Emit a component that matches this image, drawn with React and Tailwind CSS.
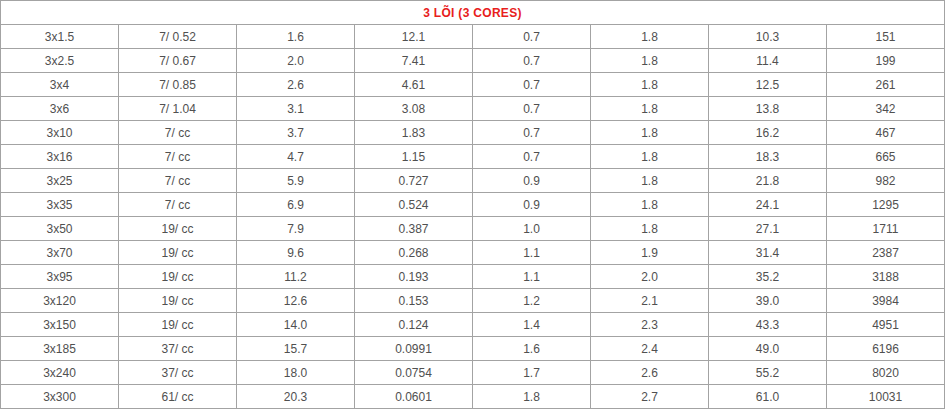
const rows = [
  ["3x1.5", "7/ 0.52", "1.6", "12.1", "0.7", "1.8", "10.3", "151"],
  ["3x2.5", "7/ 0.67", "2.0", "7.41", "0.7", "1.8", "11.4", "199"],
  ["3x4", "7/ 0.85", "2.6", "4.61", "0.7", "1.8", "12.5", "261"],
  ["3x6", "7/ 1.04", "3.1", "3.08", "0.7", "1.8", "13.8", "342"],
  ["3x10", "7/ cc", "3.7", "1.83", "0.7", "1.8", "16.2", "467"],
  ["3x16", "7/ cc", "4.7", "1.15", "0.7", "1.8", "18.3", "665"],
  ["3x25", "7/ cc", "5.9", "0.727", "0.9", "1.8", "21.8", "982"],
  ["3x35", "7/ cc", "6.9", "0.524", "0.9", "1.8", "24.1", "1295"],
  ["3x50", "19/ cc", "7.9", "0.387", "1.0", "1.8", "27.1", "1711"],
  ["3x70", "19/ cc", "9.6", "0.268", "1.1", "1.9", "31.4", "2387"],
  ["3x95", "19/ cc", "11.2", "0.193", "1.1", "2.0", "35.2", "3188"],
  ["3x120", "19/ cc", "12.6", "0.153", "1.2", "2.1", "39.0", "3984"],
  ["3x150", "19/ cc", "14.0", "0.124", "1.4", "2.3", "43.3", "4951"],
  ["3x185", "37/ cc", "15.7", "0.0991", "1.6", "2.4", "49.0", "6196"],
  ["3x240", "37/ cc", "18.0", "0.0754", "1.7", "2.6", "55.2", "8020"],
  ["3x300", "61/ cc", "20.3", "0.0601", "1.8", "2.7", "61.0", "10031"],
];

export default function App() {
  return (
    <div className="w-[947px] h-[411px] bg-white font-['Liberation_Sans',sans-serif]">
      <table className="w-[945px] table-fixed border-collapse">
        <thead>
          <tr className="h-[24px]">
            <th
              colSpan={8}
              className="border border-[#a3a3a3] text-[12px] font-bold tracking-[0.3px] text-[#e8201c] p-0"
            >
              3 LÕI (3 CORES)
            </th>
          </tr>
        </thead>
        <tbody>
          {rows.map((row, i) => (
            <tr key={i} className="h-[24px]">
              {row.map((cell, j) => (
                <td
                  key={j}
                  className="border border-[#a3a3a3] text-center text-[12px] text-[#505050] p-0"
                >
                  {cell}
                </td>
              ))}
            </tr>
          ))}
        </tbody>
      </table>
    </div>
  );
}
